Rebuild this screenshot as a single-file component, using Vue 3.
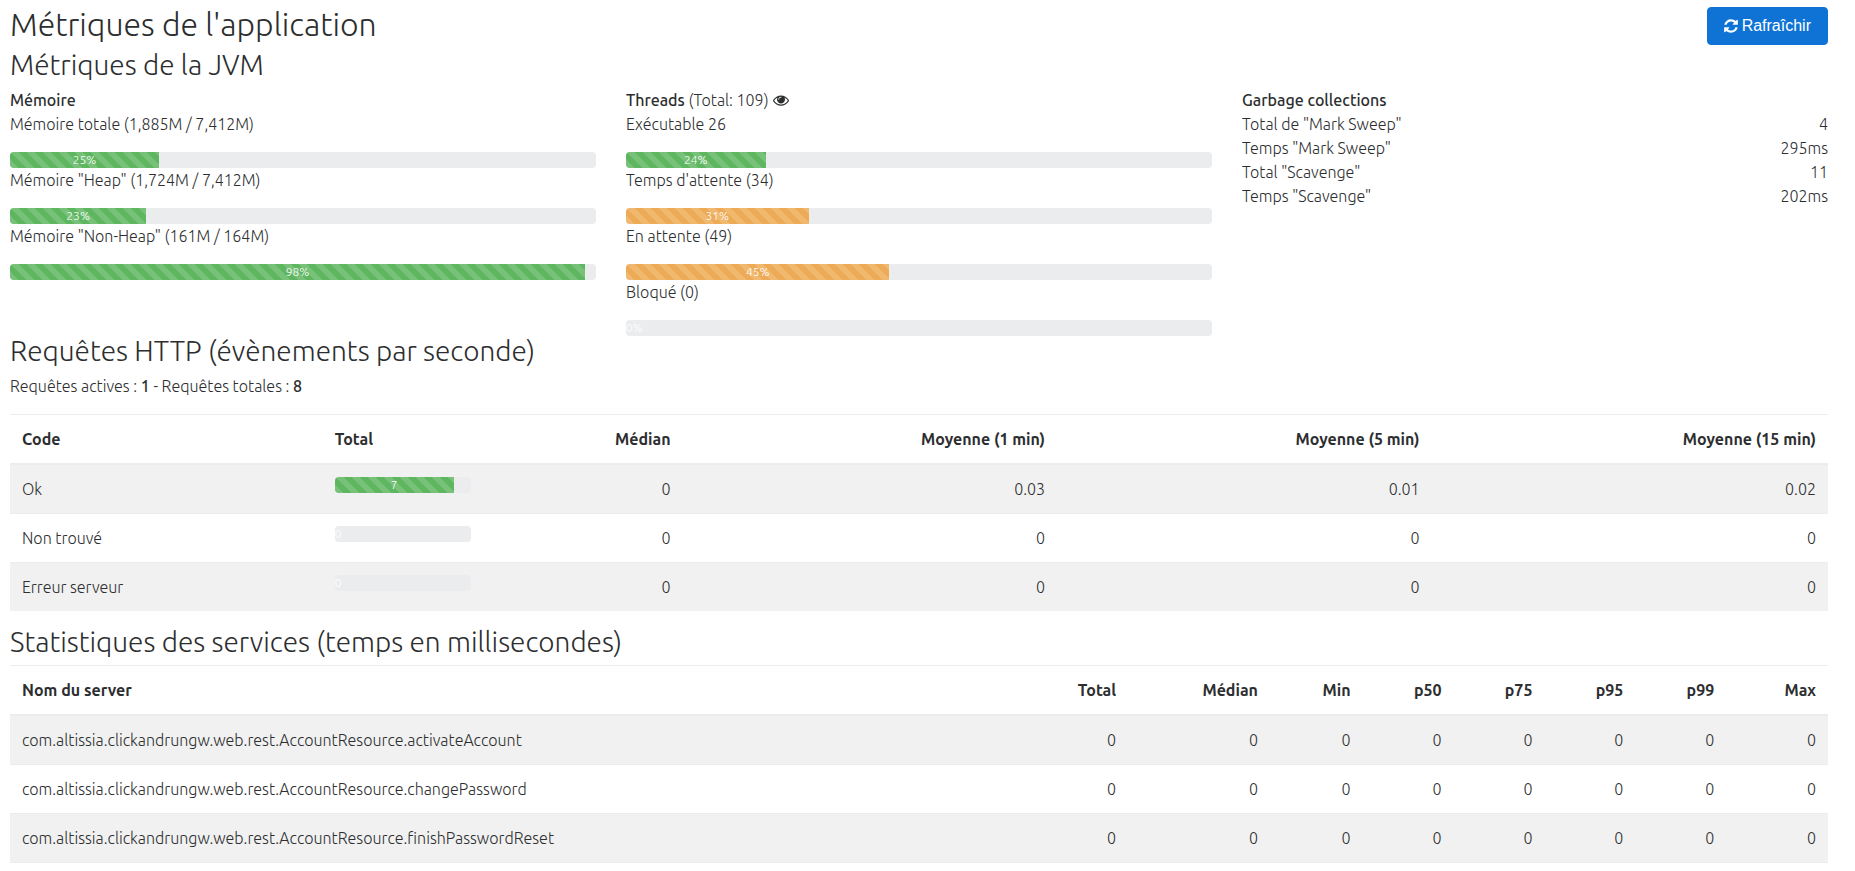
<script setup>
const memory = [
  { label: 'Mémoire totale (1,885M / 7,412M)', value: 25.43, text: '25%', tone: 'success' },
  { label: 'Mémoire "Heap" (1,724M / 7,412M)', value: 23.26, text: '23%', tone: 'success' },
  { label: 'Mémoire "Non-Heap" (161M / 164M)', value: 98.17, text: '98%', tone: 'success' },
]

const threads = [
  { label: 'Exécutable 26', value: 23.85, text: '24%', tone: 'success' },
  { label: "Temps d'attente (34)", value: 31.19, text: '31%', tone: 'warning' },
  { label: 'En attente (49)', value: 44.95, text: '45%', tone: 'warning' },
  { label: 'Bloqué (0)', value: 0, text: '0%', tone: 'success' },
]

const garbage = [
  { label: 'Total de "Mark Sweep"', value: '4' },
  { label: 'Temps "Mark Sweep"', value: '295ms' },
  { label: 'Total "Scavenge"', value: '11' },
  { label: 'Temps "Scavenge"', value: '202ms' },
]

const requests = [
  { code: 'Ok', total: 7, share: 87.5, rates: ['0', '0.03', '0.01', '0.02'] },
  { code: 'Non trouvé', total: 0, share: 0, rates: ['0', '0', '0', '0'] },
  { code: 'Erreur serveur', total: 0, share: 0, rates: ['0', '0', '0', '0'] },
]

const statHeads = ['Total', 'Médian', 'Min', 'p50', 'p75', 'p95', 'p99', 'Max']

const services = [
  'com.altissia.clickandrungw.web.rest.AccountResource.activateAccount',
  'com.altissia.clickandrungw.web.rest.AccountResource.changePassword',
  'com.altissia.clickandrungw.web.rest.AccountResource.finishPasswordReset',
]
</script>

<template>
  <main class="page">
    <header class="top">
      <h2>Métriques de l'application</h2>
      <button type="button" class="refresh">
        <svg class="refresh-icon" viewBox="0 0 1536 1792" aria-hidden="true">
          <path d="M1511 1056q0 5-1 7-64 268-268 434.500t-478 166.500q-146 0-282.500-55t-243.500-157l-129 129q-19 19-45 19t-45-19-19-45v-448q0-26 19-45t45-19h448q26 0 45 19t19 45-19 45l-137 137q71 66 161 102t187 36q134 0 250-65t186-179q11-17 53-117 8-23 30-23h192q13 0 22.500 9.500t9.500 22.500zm25-800v448q0 26-19 45t-45 19h-448q-26 0-45-19t-19-45 19-45l138-138q-148-137-349-137-134 0-250 65t-186 179q-11 17-53 117-8 23-30 23h-199q-13 0-22.500-9.500t-9.500-22.500v-7q65-268 270-434.500t480-166.500q146 0 284 55.500t245 156.500l130-129q19-19 45-19t45 19 19 45z" />
        </svg>
        <span>Rafraîchir</span>
      </button>
    </header>

    <h3>Métriques de la JVM</h3>
    <div class="columns">
      <section>
        <b>Mémoire</b>
        <div v-for="m in memory" :key="m.label">
          <p>{{ m.label }}</p>
          <div class="progress">
            <div class="bar" :class="m.tone" :style="{ width: m.value + '%' }">{{ m.text }}</div>
          </div>
        </div>
      </section>

      <section>
        <div class="threads-title">
          <span><b>Threads</b> (Total: 109)</span>
          <a href="#" class="eye" aria-label="Détail des threads">
            <svg viewBox="0 0 1792 1792" aria-hidden="true">
              <path d="M1664 960q-152-236-381-353 61 104 61 225 0 185-131.500 316.500t-316.500 131.500-316.500-131.500-131.500-316.500q0-121 61-225-229 117-381 353 133 205 333.500 326.500t434.500 121.500 434.500-121.500 333.500-326.500zm-720-384q0-20-14-34t-34-14q-125 0-214.500 89.500t-89.500 214.500q0 20 14 34t34 14 34-14 14-34q0-86 61-147t147-61q20 0 34-14t14-34zm848 384q0 34-20 69-140 230-376.500 368.500t-499.500 138.500-499.500-139-376.500-368q-20-35-20-69t20-69q140-229 376.500-368t499.500-139 499.500 139 376.500 368q20 35 20 69z" />
            </svg>
          </a>
        </div>
        <div v-for="t in threads" :key="t.label">
          <p>{{ t.label }}</p>
          <div class="progress">
            <div class="bar" :class="t.tone" :style="{ width: t.value + '%' }">{{ t.text }}</div>
          </div>
        </div>
      </section>

      <section>
        <b>Garbage collections</b>
        <div v-for="g in garbage" :key="g.label" class="pair">
          <span>{{ g.label }}</span>
          <span>{{ g.value }}</span>
        </div>
      </section>
    </div>

    <h3>Requêtes HTTP (évènements par seconde)</h3>
    <p>Requêtes actives : <b>1</b> - Requêtes totales : <b>8</b></p>
    <table class="http">
      <colgroup>
        <col class="c-code"><col class="c-total"><col class="c-median"><col class="c-rate"><col class="c-rate"><col>
      </colgroup>
      <thead>
        <tr>
          <th>Code</th>
          <th>Total</th>
          <th class="num">Médian</th>
          <th class="num">Moyenne (1 min)</th>
          <th class="num">Moyenne (5 min)</th>
          <th class="num">Moyenne (15 min)</th>
        </tr>
      </thead>
      <tbody>
        <tr v-for="r in requests" :key="r.code">
          <td>{{ r.code }}</td>
          <td>
            <div class="progress">
              <div class="bar success" :style="{ width: r.share + '%' }">{{ r.total }}</div>
            </div>
          </td>
          <td v-for="(rate, i) in r.rates" :key="i" class="num">{{ rate }}</td>
        </tr>
      </tbody>
    </table>

    <h3>Statistiques des services (temps en millisecondes)</h3>
    <table class="stats">
      <colgroup>
        <col><col class="c-total"><col class="c-median"><col class="c-min"><col class="c-stat"><col class="c-stat"><col class="c-stat"><col class="c-stat"><col class="c-max">
      </colgroup>
      <thead>
        <tr>
          <th>Nom du server</th>
          <th v-for="h in statHeads" :key="h" class="num">{{ h }}</th>
        </tr>
      </thead>
      <tbody>
        <tr v-for="s in services" :key="s">
          <td>{{ s }}</td>
          <td v-for="h in statHeads" :key="h" class="num">0</td>
        </tr>
      </tbody>
    </table>
  </main>
</template>

<style>
body {
  margin: 0;
  background: #fff;
}
</style>

<style scoped>
* {
  box-sizing: border-box;
}

.page {
  padding: 7px 27px 0 10px;
  color: #2c2e2f;
  font-family: Ubuntu, Lato, "Open Sans", sans-serif;
  font-size: 16px;
  font-weight: 300;
  line-height: 24px;
}

.top {
  display: flex;
  justify-content: space-between;
  align-items: flex-start;
  margin-bottom: 5px;
}

h2,
h3 {
  margin: 0;
  font-weight: 300;
}

h2 {
  font-size: 32px;
  line-height: 35px;
}

h3 {
  margin-bottom: 8px;
  font-size: 28px;
  line-height: 30px;
}

p {
  margin: 0 0 16px;
}

b {
  font-weight: 500;
}

.refresh {
  display: flex;
  align-items: center;
  gap: 4px;
  padding: 8px 16px;
  border: 1px solid #0f73d6;
  border-radius: 4px;
  background: #0f73d6;
  color: #fff;
  font-family: "Liberation Sans", Arial, sans-serif;
  font-size: 16px;
  line-height: 20px;
  cursor: pointer;
}

.refresh-icon {
  width: 14px;
  height: 16px;
  fill: currentColor;
}

.columns {
  display: grid;
  grid-template-columns: repeat(3, minmax(0, 1fr));
  gap: 30px;
}

.threads-title {
  display: flex;
  align-items: center;
  gap: 4px;
}

.eye {
  display: flex;
  color: inherit;
}

.eye svg {
  width: 16px;
  height: 16px;
  fill: currentColor;
}

.pair {
  display: flex;
  justify-content: space-between;
}

.progress {
  height: 16px;
  border-radius: 4px;
  background: #ebecee;
  overflow: hidden;
}

.bar {
  height: 16px;
  color: #fff;
  font-size: 12px;
  line-height: 16px;
  text-align: center;
  background-image: linear-gradient(45deg, rgba(255, 255, 255, 0.15) 25%, transparent 25%, transparent 50%, rgba(255, 255, 255, 0.15) 50%, rgba(255, 255, 255, 0.15) 75%, transparent 75%, transparent);
  background-size: 16px 16px;
}

.success {
  background-color: #5fb661;
}

.warning {
  background-color: #eeab57;
}

table {
  width: 100%;
  margin-bottom: 16px;
  border-collapse: collapse;
  table-layout: fixed;
}

th,
td {
  padding: 12px;
  border-top: 1px solid #ebecee;
  text-align: left;
  vertical-align: top;
}

th {
  border-bottom: 2px solid #ebecee;
  font-weight: 700;
}

tbody tr:nth-child(odd) {
  background: #f1f1f1;
}

.num {
  text-align: right;
}

.http .c-code { width: 17.2%; }
.http .c-total { width: 8.8%; }
.http .c-median { width: 11%; }
.http .c-rate { width: 20.6%; }

.stats {
  border-bottom: 1px solid #ebecee;
}

.stats .c-total { width: 8%; }
.stats .c-median { width: 7.8%; }
.stats .c-min { width: 5.1%; }
.stats .c-stat { width: 5%; }
.stats .c-max { width: 5.6%; }
</style>
